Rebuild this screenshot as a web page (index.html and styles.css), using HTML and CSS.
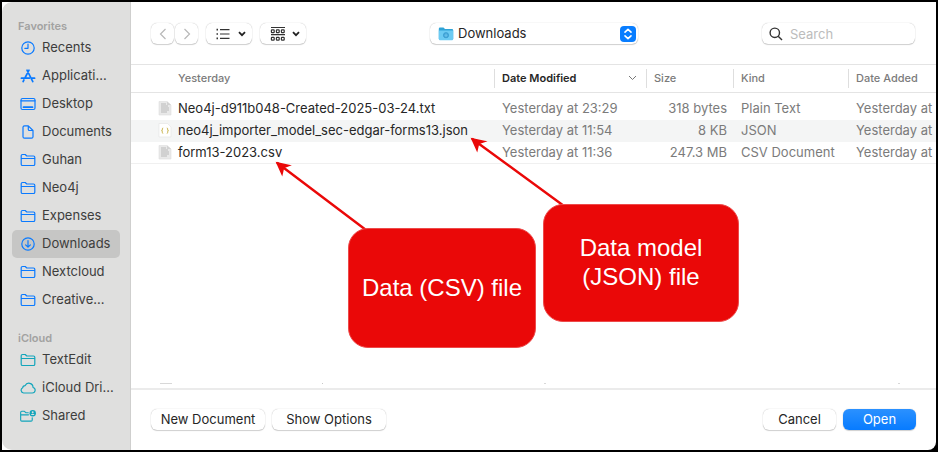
FILE: index.html
```html
<!DOCTYPE html>
<html lang="en">
<head>
<meta charset="utf-8">
<title>Open file</title>
<link rel="stylesheet" href="styles.css">
</head>
<body>
<svg class="sprite" aria-hidden="true">
  <symbol id="folder" viewBox="0 0 16 16"><path d="M1.2 12.2V3.8Q1.2 2.5 2.5 2.5H5.2L6.8 4H13.5Q14.8 4 14.8 5.3V12.2Q14.8 13.5 13.5 13.5H2.5Q1.2 13.5 1.2 12.2ZM1.2 6.5H14.8"/></symbol>
  <symbol id="clock" viewBox="0 0 16 16"><circle cx="8" cy="8" r="6.2"/><path d="M8 4V8.3H4.8"/></symbol>
  <symbol id="apps" viewBox="0 0 16 16"><path class="thick" d="M7 2.2L12.8 13.6M9 2.2L5.2 9.5M3.9 12L3.1 13.6M1.4 10.2H9.2M12 10.2H14.6"/></symbol>
  <symbol id="desktop" viewBox="0 0 16 16"><rect x="1" y="2.5" width="14" height="11" rx="1.5"/><path d="M1 4.8H15"/><path class="thick" d="M3.5 11.2H12.5"/></symbol>
  <symbol id="document" viewBox="0 0 16 16"><path d="M3 12.7V3.3Q3 1.8 4.5 1.8H8.3L13 6.5V12.7Q13 14.2 11.5 14.2H4.5Q3 14.2 3 12.7ZM8.3 1.8V5.5Q8.3 6.5 9.3 6.5H13"/></symbol>
  <symbol id="download" viewBox="0 0 16 16"><circle cx="8" cy="8" r="6.2"/><path d="M8 4.6V11M5.6 8.8L8 11.2L10.4 8.8"/></symbol>
  <symbol id="cloud" viewBox="0 0 16 16"><path d="M3.6 13H12.2A2.9 2.9 0 0 0 13 7.3A4.1 4.1 0 0 0 5.2 5.6A2.4 2.4 0 0 0 2.7 7.7A2.8 2.8 0 0 0 3.6 13Z"/></symbol>
  <symbol id="shared" viewBox="0 0 17 16"><path d="M8.8 4.5H6.2L4.7 3H1.9Q.7 3 .7 4.2V12.3Q.7 13.5 1.9 13.5H11.8Q13 13.5 13 12.3V9.8M.7 6.8H9"/><circle class="solid" cx="13.5" cy="5" r="3.4"/><circle class="hole" cx="13.5" cy="4" r="1"/><path class="hole" d="M11.6 7A2 2 0 0 1 15.4 7Z"/></symbol>
  <symbol id="sheet" viewBox="0 0 14 16"><path d="M1 1.5H9L13 5V15H1Z" fill="#e9e9e9" stroke="#dedede" stroke-width=".6"/><path d="M3 4H8M3 6H10M3 8H11M3 10H11M3 12H9" stroke="#b3b3b3" stroke-width=".9" fill="none"/><path d="M9 1.5V5H13Z" fill="#d2d2d2"/></symbol>
</svg>
<main class="window">
  <nav class="sidebar" aria-label="Locations">
    <h2>Favorites</h2>
    <ul>
      <li><a href="#"><svg><use href="#clock"/></svg><span>Recents</span></a></li>
      <li><a href="#"><svg><use href="#apps"/></svg><span>Applicati...</span></a></li>
      <li><a href="#"><svg><use href="#desktop"/></svg><span>Desktop</span></a></li>
      <li><a href="#"><svg><use href="#document"/></svg><span>Documents</span></a></li>
      <li><a href="#"><svg><use href="#folder"/></svg><span>Guhan</span></a></li>
      <li><a href="#"><svg><use href="#folder"/></svg><span>Neo4j</span></a></li>
      <li><a href="#"><svg><use href="#folder"/></svg><span>Expenses</span></a></li>
      <li><a href="#" class="current" aria-current="page"><svg><use href="#download"/></svg><span>Downloads</span></a></li>
      <li><a href="#"><svg><use href="#folder"/></svg><span>Nextcloud</span></a></li>
      <li><a href="#"><svg><use href="#folder"/></svg><span>Creative...</span></a></li>
    </ul>
    <h2>iCloud</h2>
    <ul class="icloud">
      <li><a href="#"><svg><use href="#folder"/></svg><span>TextEdit</span></a></li>
      <li><a href="#"><svg><use href="#cloud"/></svg><span>iCloud Dri...</span></a></li>
      <li><a href="#"><svg><use href="#shared"/></svg><span>Shared</span></a></li>
    </ul>
  </nav>
  <section class="content">
    <header class="toolbar">
      <div class="tools">
        <div class="history">
          <button class="control nav" aria-label="Back"><svg width="8" height="12" viewBox="0 0 8 12"><path d="M6.5 1L1.5 6L6.5 11"/></svg></button>
          <button class="control nav" aria-label="Forward"><svg width="8" height="12" viewBox="0 0 8 12"><path d="M1.5 1L6.5 6L1.5 11"/></svg></button>
        </div>
        <button class="control view" aria-label="View as list">
          <svg width="14" height="12" viewBox="0 0 14 12"><path d="M4 1.7H13.5M4 6H13.5M4 10.3H13.5"/><path class="dots" d="M.5 1.7H2M.5 6H2M.5 10.3H2"/></svg>
          <svg width="8" height="6" viewBox="0 0 8 6"><path class="arrow" d="M1 1.2L4 4.2L7 1.2"/></svg>
        </button>
        <button class="control view" aria-label="Group items">
          <svg width="16" height="16" viewBox="0 0 16 16"><path d="M1 1.5H15M1 8.7H15"/><g><rect x="1.4" y="3.9" width="2.8" height="2.8" rx=".6"/><rect x="6.4" y="3.9" width="2.8" height="2.8" rx=".6"/><rect x="11.4" y="3.9" width="2.8" height="2.8" rx=".6"/><rect x="1.4" y="11.3" width="2.8" height="2.8" rx=".6"/><rect x="6.4" y="11.3" width="2.8" height="2.8" rx=".6"/><rect x="11.4" y="11.3" width="2.8" height="2.8" rx=".6"/></g></svg>
          <svg width="8" height="6" viewBox="0 0 8 6"><path class="arrow" d="M1 1.2L4 4.2L7 1.2"/></svg>
        </button>
      </div>
      <div class="control location">
        <svg class="place" width="16" height="14" viewBox="0 0 16 14"><path d="M.8 1.8Q.8.6 2 .6H5.5L7 2H14Q15.2 2 15.2 3.2V12H.8Z" fill="#2fa3d6"/><path d="M.8 3.6H15.2V12Q15.2 13.3 14 13.3H2Q.8 13.3.8 12Z" fill="#6ccbf3"/><circle cx="8" cy="8.2" r="2.6" fill="#48a9dc" stroke="#3298cc" stroke-width=".7"/><path d="M8 6.8V9.2M7 8.4L8 9.4L9 8.4" fill="none" stroke="#7fd2f5" stroke-width=".7"/></svg>
        <select aria-label="Location"><option>Downloads</option></select>
        <svg class="stepper" width="16" height="16" viewBox="0 0 16 16"><rect width="16" height="16" rx="4" fill="#087dff"/><path d="M5 6.2L8 3.3L11 6.2M5 9.8L8 12.7L11 9.8" fill="none" stroke="#fff" stroke-width="1.6" stroke-linecap="round" stroke-linejoin="round"/></svg>
      </div>
      <label class="control search">
        <svg width="14" height="14" viewBox="0 0 14 14"><circle cx="5.8" cy="5.8" r="4.7"/><path d="M9.2 9.2L13 13"/></svg>
        <input type="search" placeholder="Search" aria-label="Search">
      </label>
    </header>
    <div class="files">
      <table>
        <colgroup><col class="c-name"><col class="c-date"><col class="c-size"><col class="c-kind"><col></colgroup>
        <thead>
          <tr><th class="name">Yesterday</th><th class="sorted"><div>Date Modified<svg width="9" height="6" viewBox="0 0 9 6"><path d="M1 1L4.5 4.5L8 1"/></svg></div></th><th>Size</th><th>Kind</th><th>Date Added</th></tr>
        </thead>
        <tbody>
          <tr><td class="name"><div><svg width="14" height="16"><use href="#sheet"/></svg>Neo4j-d911b048-Created-2025-03-24.txt</div></td><td>Yesterday at 23:29</td><td class="size">318 bytes</td><td>Plain Text</td><td>Yesterday at 23:29</td></tr>
          <tr><td class="name"><div><svg width="14" height="16" viewBox="0 0 14 16"><path d="M1 1.5H9.5L13 5V15H1Z" fill="#fff" stroke="#e2e2e2" stroke-width=".6"/><path d="M5.2 6Q4.3 6 4.3 7V8Q4.3 8.7 3.6 8.7Q4.3 8.7 4.3 9.4V10.4Q4.3 11.4 5.2 11.4M8.8 6Q9.7 6 9.7 7V8Q9.7 8.7 10.4 8.7Q9.7 8.7 9.7 9.4V10.4Q9.7 11.4 8.8 11.4" fill="none" stroke="#c4ad3c" stroke-width=".9"/></svg>neo4j_importer_model_sec-edgar-forms13.json</div></td><td>Yesterday at 11:54</td><td class="size">8 KB</td><td>JSON</td><td>Yesterday at 11:54</td></tr>
          <tr><td class="name"><div><svg width="14" height="16"><use href="#sheet"/></svg>form13-2023.csv</div></td><td>Yesterday at 11:36</td><td class="size">247.3 MB</td><td>CSV Document</td><td>Yesterday at 11:36</td></tr>
        </tbody>
      </table>
    </div>
    <footer class="actions">
      <button class="control wide">New Document</button>
      <button class="control wide">Show Options</button>
      <span class="spacer"></span>
      <button class="control short">Cancel</button>
      <button class="control short primary">Open</button>
    </footer>
  </section>
</main>
<svg class="arrows" width="938" height="452" viewBox="0 0 938 452" aria-hidden="true">
  <path d="M277 162.800L366 230M472 138.800L564 206"/>
  <path class="head" d="M289 165.500L277 162.800L282 174L283.500 167.500ZM484.500 141.500L472 138.800L477 150L478.500 143.500Z"/>
</svg>
<div class="callout csv">Data (CSV) file</div>
<div class="callout json">Data model (JSON) file</div>
</body>
</html>
```
FILE: styles.css
```css
* { box-sizing: border-box; }
body {
  margin: 0;
  padding: 2px;
  min-height: 100vh;
  display: flex;
  background: #000;
  color: #262626;
  font: 13px/16px Inter, "Liberation Sans", sans-serif;
}
button, input, select { font: inherit; color: inherit; }
.sprite { position: absolute; width: 0; height: 0; }

.window {
  flex: 1;
  min-width: 0;
  display: flex;
  overflow: hidden;
  background: #fff;
  border-radius: 0 0 8px 0;
}

/* Sidebar */
.sidebar {
  flex: none;
  width: 129px;
  padding: 16px 10px 0;
  background: #dfdfde;
  border-right: 1px solid #cfcfce;
  border-radius: 10px 0 0 10px;
}
.sidebar h2 {
  margin: 0;
  padding-left: 6px;
  font-size: 11px;
  line-height: 16px;
  font-weight: 600;
  color: #a2a2a1;
}
.sidebar ul { list-style: none; margin: 0 0 16px; padding: 0; }
.sidebar a {
  display: flex;
  align-items: center;
  gap: 6px;
  height: 28px;
  padding-left: 8px;
  border-radius: 5px;
  color: #3d3d3c;
  text-decoration: none;
  white-space: nowrap;
}
.sidebar span { padding-bottom: 2px; }
.sidebar a.current { background: #c6c6c5; }
.sidebar svg {
  flex: none;
  width: 16px;
  height: 16px;
  fill: none;
  stroke: #0a7aff;
  stroke-width: 1.2;
  stroke-linejoin: round;
  stroke-linecap: round;
}
.thick { stroke-width: 1.7; }
.icloud svg { stroke: #12a5bb; }
.solid { fill: #12a5bb; stroke: none; }
.hole { fill: #dfdfde; stroke: none; }

/* Controls */
.content { flex: 1; min-width: 0; display: flex; flex-direction: column; }
.control {
  display: flex;
  align-items: center;
  height: 21px;
  padding: 0;
  border: 0;
  border-radius: 6px;
  background: #fff;
  box-shadow: 0 0 1px rgba(0, 0, 0, .3), 0 1px 1px rgba(0, 0, 0, .17);
}
.toolbar {
  display: flex;
  justify-content: space-between;
  padding: 21px 21px 20px 20px;
  border-bottom: 1px solid #e4e4e4;
}
.tools { display: flex; gap: 8px; }
.history { display: flex; gap: 1px; }
.control svg { fill: none; stroke: #333; stroke-width: 1.2; flex: none; }
.nav { width: 23px; justify-content: center; }
.control.nav svg { stroke: #b8b8b8; }
.view { width: 46px; justify-content: space-between; padding: 0 6px 0 10px; }
.view .dots { stroke-width: 1.7; }
.view .arrow { stroke: #222; stroke-width: 1.8; }
.location { position: relative; width: 208px; }
.location select {
  flex: 1;
  height: 21px;
  padding: 0 28px 2px;
  border: 0;
  background: none;
  appearance: none;
}
.control.location svg { position: absolute; stroke: none; pointer-events: none; }
.place { left: 8px; }
.stepper { right: 2px; }
.search { width: 153px; gap: 7px; padding-left: 7px; }
.control.search svg { stroke: #333; stroke-width: 1.4; }
.search input {
  flex: 1;
  min-width: 0;
  padding: 0;
  border: 0;
  background: none;
  outline: 0;
}
.search input::placeholder { color: #bcbcbc; }

.files {
  flex: 1;
  overflow: hidden;
  background:
    linear-gradient(#d8d8d8, #d8d8d8) 29px calc(100% - 4px) / 12px 1px no-repeat,
    linear-gradient(#c8c8c8, #c8c8c8) 191px calc(100% - 4px) / 1px 1px no-repeat,
    linear-gradient(#d8d8d8, #d8d8d8) 413px calc(100% - 4px) / 2px 1px no-repeat,
    linear-gradient(#d8d8d8, #d8d8d8) 767px calc(100% - 4px) / 2px 1px no-repeat;
}
table { width: 100%; table-layout: fixed; border-collapse: separate; border-spacing: 0; }
.c-name { width: 363px; }
.c-date { width: 152px; }
.c-size { width: 87px; }
.c-kind { width: 115px; }
th, td { padding: 0 0 2px 8px; text-align: left; white-space: nowrap; color: #7b7b7b; }
th {
  height: 28px;
  font-size: 11px;
  font-weight: 500;
  border-bottom: 1px solid #e4e4e4;
  background: linear-gradient(#dedede, #dedede) 0 4px / 1px 19px no-repeat;
}
th.name { padding-left: 47px; background: none; }
th.sorted { color: #262626; font-weight: 600; }
.sorted div { display: flex; align-items: center; justify-content: space-between; padding-right: 9px; }
.sorted svg { fill: none; stroke: #777; }
tbody::before { content: ""; display: block; height: 5px; }
td { height: 22px; }
tbody tr:nth-child(2) td { background: #f4f5f5; }
tbody tr:last-child td { border-bottom: 1px solid #f0f0f0; }
td.name { padding-left: 27px; color: #262626; }
td.name div { display: flex; align-items: center; gap: 6px; }
td.size { text-align: right; padding-right: 6px; }

.actions {
  display: flex;
  gap: 7px;
  padding: 19px 20px 20px;
  border-top: 2px solid #ebebeb;
}
.spacer { flex: 1; }
.actions .control { justify-content: center; padding-bottom: 2px; }
.wide { width: 114px; }
.short { width: 73px; }
.actions .primary { background: linear-gradient(#2b91ff, #077bff); color: #fff; }

/* Annotations lying over the dialog */
.arrows { position: absolute; left: 0; top: 0; fill: none; stroke: #ea0808; stroke-width: 2.4; pointer-events: none; }
.head { fill: #ea0808; stroke-width: 1.6; stroke-linejoin: miter; }
.callout {
  position: absolute;
  display: flex;
  align-items: center;
  justify-content: center;
  padding-bottom: 2px;
  border: 1px solid #ed4a4a;
  border-radius: 20px;
  background: #ea0808;
  color: #fff;
  font: 24px/29px "Liberation Sans", Arial, sans-serif;
  text-align: center;
}
.csv { left: 348px; top: 228px; width: 188px; height: 120px; }
.json { left: 543px; top: 204px; width: 196px; height: 118px; padding: 0 24px 2px; }
```
